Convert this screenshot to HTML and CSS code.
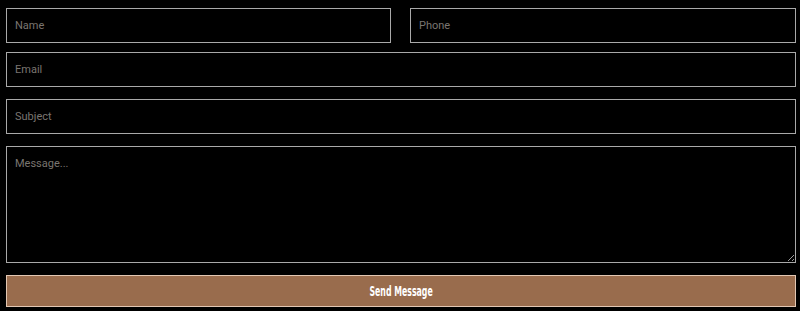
FILE: index.html
```html
<!DOCTYPE html>
<html lang="en">

<head>
    <meta charset="UTF-8">
    <meta name="viewport" content="width=device-width, initial-scale=1.0">
    <title>Contact</title>
    <link rel="stylesheet" href="styles.css">
</head>

<body>
    <form class="contact-form">
        <div class="row two">
            <input class="field" type="text" placeholder="Name">
            <input class="field" type="text" placeholder="Phone">
        </div>
        <input class="field email" type="email" placeholder="Email">
        <input class="field" type="text" placeholder="Subject">
        <textarea class="field message" placeholder="Message..."></textarea>
        <button class="send" type="button"><span class="send-label">Send Message</span></button>
    </form>
</body>

</html>
```

FILE: styles.css
```css
body {
    margin: 0;
    background-color: #000;
    font-family: Roboto, "Liberation Sans", sans-serif;
}

.contact-form {
    display: flex;
    flex-direction: column;
    gap: 12px;
    width: 790px;
    margin: 8px 0 0 6px;
}

.row.two {
    display: grid;
    grid-template-columns: 385px 386px;
    column-gap: 19px;
    margin-bottom: -3px;
}

.field {
    display: block;
    box-sizing: border-box;
    width: 100%;
    height: 35px;
    margin: 0;
    padding: 0 8px;
    background-color: #000;
    border: 1px solid #a9a9a9;
    border-radius: 0;
    color: #ddd;
    font-family: Roboto, "Liberation Sans", sans-serif;
    font-size: 11px;
    outline: none;
}

.field::placeholder {
    color: #7a7570;
}

.message {
    height: 117px;
    padding: 10px 8px;
    resize: vertical;
}

.send {
    display: block;
    box-sizing: border-box;
    width: 100%;
    height: 32px;
    margin: 0;
    background-color: #996c4d;
    border: 1px solid #e2c7b3;
    color: #fff;
    font-family: "DejaVu Sans Condensed", "DejaVu Sans", sans-serif;
    font-stretch: condensed;
    font-weight: bold;
    font-size: 14px;
    cursor: pointer;
}

.send-label {
    display: inline-block;
    transform: scaleX(0.62);
}
```
